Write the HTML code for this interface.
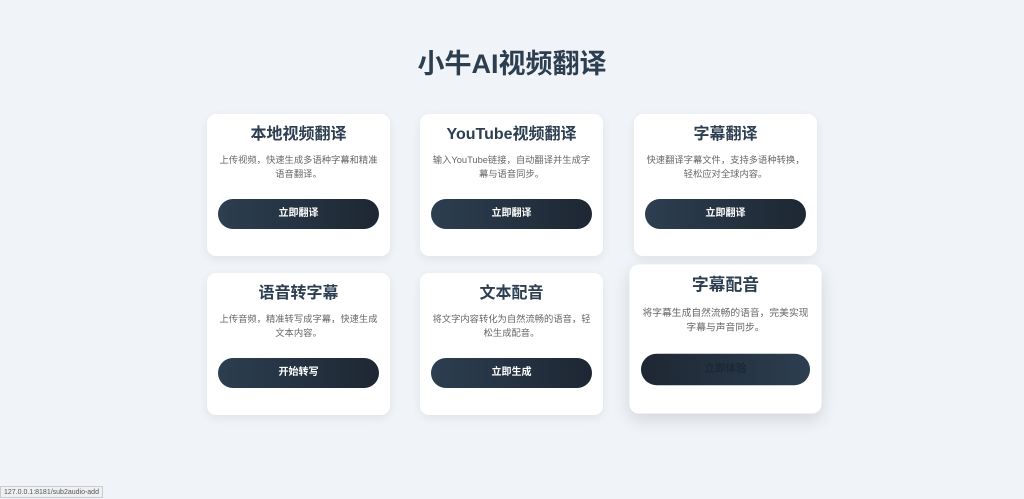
<!DOCTYPE html>
<html><head><meta charset="utf-8"><style>
*{margin:0;padding:0;box-sizing:border-box}
body{width:1024px;height:499px;overflow:hidden;background:#f0f4f8;font-family:"Liberation Sans","Noto Sans CJK SC",sans-serif;position:relative}
h1{position:absolute;top:42px;left:0;width:1024px;text-align:center;font-size:27px;color:#2c3e50;font-weight:bold}
.card{position:absolute;width:183px;height:142px;background:#fff;border-radius:9px;box-shadow:0 3px 10px rgba(0,0,0,0.07);text-align:center;padding-top:10px}
.card h2{font-size:16px;color:#2c3e50;font-weight:bold;line-height:22px}
.card p{font-size:9.3px;color:#666;line-height:14px;margin:7px 11px 0;height:28px}
.btn{position:absolute;left:11px;top:85px;width:161px;height:30px;border-radius:15px;background:linear-gradient(90deg,#2c3e50,#1e2733);color:#fff;font-size:10px;font-weight:bold;line-height:30px}
.hov{transform:translateY(-5px) scale(1.05);box-shadow:0 6px 16px rgba(0,0,0,0.12)}
.hov .btn{background:linear-gradient(90deg,#1e2733,#2c3e50);color:#1e2733}
.status{position:absolute;left:0;top:486px;height:12px;padding:0 3px;background:#eef0f2;border:1px solid #ccc;font-size:7px;color:#555;line-height:11px}
</style></head><body>
<h1>小牛AI视频翻译</h1>
<div class="card" style="left:207px;top:114px"><h2>本地视频翻译</h2><p>上传视频，快速生成多语种字幕和精准语音翻译。</p><div class="btn">立即翻译</div></div>
<div class="card" style="left:420px;top:114px"><h2>YouTube视频翻译</h2><p>输入YouTube链接，自动翻译并生成字幕与语音同步。</p><div class="btn">立即翻译</div></div>
<div class="card" style="left:634px;top:114px"><h2>字幕翻译</h2><p>快速翻译字幕文件，支持多语种转换，轻松应对全球内容。</p><div class="btn">立即翻译</div></div>
<div class="card" style="left:207px;top:273px"><h2>语音转字幕</h2><p>上传音频，精准转写成字幕，快速生成文本内容。</p><div class="btn">开始转写</div></div>
<div class="card" style="left:420px;top:273px"><h2>文本配音</h2><p>将文字内容转化为自然流畅的语音，轻松生成配音。</p><div class="btn">立即生成</div></div>
<div class="card hov" style="left:634px;top:273px"><h2>字幕配音</h2><p>将字幕生成自然流畅的语音，完美实现字幕与声音同步。</p><div class="btn">立即体验</div></div>
<div class="status">127.0.0.1:8181/sub2audio-add</div>
</body></html>
